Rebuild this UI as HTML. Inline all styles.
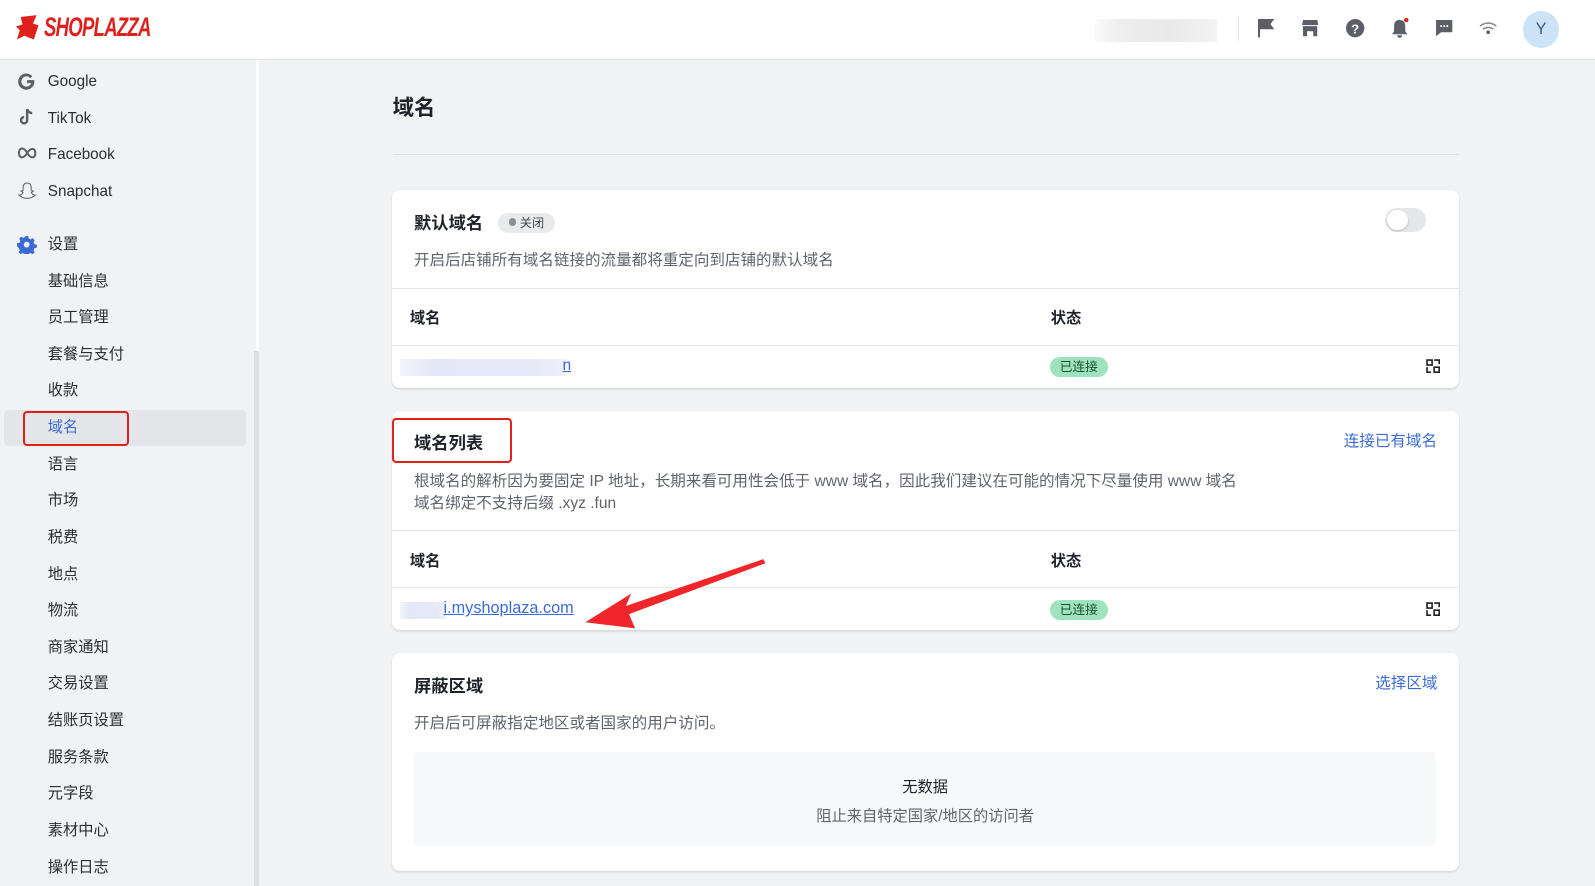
<!DOCTYPE html>
<html><head><meta charset="utf-8"><style>
html,body{margin:0;padding:0;overflow:hidden}
body{width:1568px;height:871px;zoom:1.01722;background:#f1f2f4;font-family:"Liberation Sans","Noto Sans CJK SC",sans-serif;color:#1f2329;position:relative}
.a{position:absolute}
.hdr{left:0;top:0;width:1568px;height:58px;background:#fff;border-bottom:1px solid #e3e5e8}
.side{left:0;top:59px;width:252px;height:812px;background:#f1f2f4;border-right:3px solid #fff}
.it{position:absolute;left:47px;font-size:15px;color:#2a2d33;line-height:20px;margin-top:1px}
.card{position:absolute;left:385px;width:1049px;background:#fff;border-radius:8px;box-shadow:0 1px 2px rgba(0,0,0,.12)}
.ttl{position:absolute;font-size:17px;font-weight:bold;color:#1f2329}
.desc{position:absolute;font-size:15.3px;color:#60646c}
.sep{position:absolute;left:0;width:100%;height:1px;background:#e6e8eb}
.th{position:absolute;font-size:15px;font-weight:bold;color:#1f2329}
.ok{position:absolute;width:57px;height:20px;border-radius:10px;background:#9ee3bd;font-size:12.5px;color:#1f4f33;text-align:center;line-height:20px}
.lnk{position:absolute;font-size:15.3px;color:#3c6bd6}
.blur{position:absolute;height:17px;background:linear-gradient(90deg,#f3f4fa,#e3e7f8 20%,#e6e9f8 80%,#eef0fa)}
.ic{position:absolute;top:18px}
</style></head><body>
<div class="a hdr">
 <svg class="a" style="left:16px;top:14px" width="24" height="28" viewBox="0 0 26 28"><path d="M5 2 L22 0 L18 9 L24 11 L19 26 L9 22 L1 26 L4 16 L0 12 L7 10 Z" fill="#e0201b"/></svg>
 <div class="a" style="left:43px;top:12px;font-size:26px;font-weight:bold;font-style:italic;color:#e0201b;letter-spacing:-1px;transform:scaleX(.7);transform-origin:left">SHOPLAZZA</div>
 <div class="a" style="left:1076px;top:19px;width:120px;height:22px;background:linear-gradient(90deg,#fafafa,#eeeeee 20%,#e9e9e9 60%,#f3f3f3)"></div>
 <div class="a" style="left:1217px;top:16px;width:1px;height:24px;background:#e3e3e3"></div>
 <svg class="ic" style="left:1236px" width="18" height="20" viewBox="0 0 18 20"><path d="M2 1v18M2 2h13l-3 4 3 4H2" fill="#5c5f66" stroke="#5c5f66" stroke-width="2"/></svg>
 <svg class="ic" style="left:1279px" width="18" height="20" viewBox="0 0 18 20"><path d="M2 2h14l1 5H1z M2 8h14v10h-4v-5H6v5H2z" fill="#5c5f66"/></svg>
 <svg class="ic" style="left:1322px" width="20" height="20" viewBox="0 0 20 20"><circle cx="10" cy="10" r="9" fill="#5c5f66"/><text x="10" y="15" font-size="13" font-weight="bold" fill="#fff" text-anchor="middle" font-family="Liberation Sans">?</text></svg>
 <svg class="ic" style="left:1366px" width="20" height="20" viewBox="0 0 20 20"><path d="M9 2c-4 0-5 3-5 6v5l-2 3h15l-2-3V8c0-3-1-6-6-6zM7 17h5a2.5 2.5 0 0 1-5 0z" fill="#5c5f66"/><circle cx="16" cy="2" r="2.2" fill="#e0201b"/></svg>
 <svg class="ic" style="left:1410px" width="20" height="20" viewBox="0 0 20 20"><path d="M2 2h16v12H7l-5 4z" fill="#5c5f66"/><circle cx="7" cy="8" r="1" fill="#fff"/><circle cx="10" cy="8" r="1" fill="#fff"/><circle cx="13" cy="8" r="1" fill="#fff"/></svg>
 <svg class="ic" style="left:1453px" width="20" height="20" viewBox="0 0 20 20"><path d="M2 8a12 12 0 0 1 16 0M5 11a8 8 0 0 1 10 0" fill="none" stroke="#8a8d93" stroke-width="1.6"/><circle cx="10" cy="14" r="1.8" fill="#5c5f66"/></svg>
 <div class="a" style="left:1497px;top:11px;width:36px;height:36px;border-radius:50%;background:#cde3f8;color:#3b5a86;font-size:16px;text-align:center;line-height:36px">Y</div>
</div>
<div class="a side"></div>
<div class="a" style="left:250px;top:345px;width:5px;height:526px;background:#dcdee2"></div>
<svg class="a" style="left:18px;top:71px" width="18" height="18" viewBox="0 0 18 18"><path d="M16 8H9v3h4a5 5 0 1 1-1-5l2-2a8 8 0 1 0 2 4z" fill="#5c5f66"/></svg>
<div class="it" style="top:70px">Google</div>
<svg class="a" style="left:18px;top:106px" width="18" height="18" viewBox="0 0 18 18"><path d="M9 1v11a3 3 0 1 1-3-3" fill="none" stroke="#5c5f66" stroke-width="2.4"/><path d="M9 1c1 3 3 4 5 4" fill="none" stroke="#5c5f66" stroke-width="2.4"/></svg>
<div class="it" style="top:106px">TikTok</div>
<svg class="a" style="left:17px;top:144px" width="20" height="14" viewBox="0 0 20 14"><path d="M10 7C7 1 2 1 2 7s5 5 8 0 8-6 8 0-5 5-8 0" fill="none" stroke="#5c5f66" stroke-width="2"/></svg>
<div class="it" style="top:142px">Facebook</div>
<svg class="a" style="left:17px;top:178px" width="20" height="20" viewBox="0 0 20 20"><path d="M10 2c-3 0-4 2-4 5v2l-2 1 2 1c-1 2-2 3-4 3 1 1 2 1 3 2l3 1h4l3-1c1-1 2-1 3-2-2 0-3-1-4-3l2-1-2-1V7c0-3-1-5-4-5z" fill="none" stroke="#6b6e75" stroke-width="1.1"/></svg>
<div class="it" style="top:178px">Snapchat</div>
<svg class="a" style="left:17px;top:231px" width="19" height="19" viewBox="0 0 20 20"><path d="M8.5 1h3l.5 2.5 2 1 2.3-1.2 2 2-1.2 2.3 1 2 2.5.5v3l-2.5.5-1 2 1.2 2.3-2 2-2.3-1.2-2 1-.5 2.5h-3l-.5-2.5-2-1-2.3 1.2-2-2 1.2-2.3-1-2L0 11.5v-3L2.5 8l1-2-1.2-2.3 2-2L6.6 3l2-1z" fill="#3c6bd6"/><circle cx="10" cy="10" r="3" fill="#f1f2f4"/></svg>
<div class="it" style="top:230px">设置</div>
<div class="a" style="left:4px;top:403px;width:238px;height:35px;background:#e3e5e9;border-radius:4px"></div>
<div class="a" style="left:23px;top:404px;width:100px;height:31px;border:2px solid #e0201b;border-radius:4px"></div>
<div class="it" style="top:266px">基础信息</div>
<div class="it" style="top:302px">员工管理</div>
<div class="it" style="top:338px">套餐与支付</div>
<div class="it" style="top:374px">收款</div>
<div class="it" style="top:410px;color:#3c6bd6">域名</div>
<div class="it" style="top:446px">语言</div>
<div class="it" style="top:482px">市场</div>
<div class="it" style="top:518px">税费</div>
<div class="it" style="top:554px">地点</div>
<div class="it" style="top:590px">物流</div>
<div class="it" style="top:626px">商家通知</div>
<div class="it" style="top:662px">交易设置</div>
<div class="it" style="top:698px">结账页设置</div>
<div class="it" style="top:734px">服务条款</div>
<div class="it" style="top:770px">元字段</div>
<div class="it" style="top:806px">素材中心</div>
<div class="it" style="top:842px">操作日志</div>

<div class="a" style="left:386px;top:89px;font-size:21px;font-weight:bold">域名</div>
<div class="a" style="left:386px;top:151px;width:1048px;height:1px;background:#dfe1e5"></div>

<div class="card" style="top:187px;height:194px">
 <div class="ttl" style="left:22px;top:18px">默认域名</div>
 <div class="a" style="left:105px;top:22px;width:56px;height:20px;border-radius:10px;background:#e9eaec;font-size:12px;color:#444;line-height:20px"><span style="display:inline-block;width:7px;height:7px;border-radius:50%;background:#8a8d93;margin:0 4px 1px 10px"></span>关闭</div>
 <div class="a" style="left:977px;top:17px;width:40px;height:24px;border-radius:12px;background:#e6e7ea"><div class="a" style="left:2px;top:2px;width:20px;height:20px;border-radius:50%;background:#fff;box-shadow:0 1px 2px rgba(0,0,0,.2)"></div></div>
 <div class="desc" style="left:22px;top:57px">开启后店铺所有域名链接的流量都将重定向到店铺的默认域名</div>
 <div class="sep" style="top:96px"></div>
 <div class="th" style="left:18px;top:114px">域名</div>
 <div class="th" style="left:648px;top:114px">状态</div>
 <div class="sep" style="top:152px"></div>
 <div class="blur" style="left:8px;top:166px;width:163px"></div>
 <div class="lnk" style="left:168px;top:164px;text-decoration:underline">n</div>
 <div class="ok" style="left:647px;top:164px">已连接</div>
 <svg class="a" style="left:1017px;top:166px" width="14" height="14" viewBox="0 0 14 14"><path d="M1 1h5v5H1zM8 8h5v5H8zM8 1h5v4M1 8v5h4" fill="none" stroke="#222" stroke-width="1.6"/></svg>
</div>

<div class="card" style="top:404px;height:215px">
 <div class="a" style="left:0px;top:7px;width:114px;height:40px;border:2px solid #e0201b;border-radius:4px"></div>
 <div class="ttl" style="left:22px;top:18px">域名列表</div>
 <div class="lnk" style="left:936px;top:18px">连接已有域名</div>
 <div class="desc" style="left:22px;top:57px">根域名的解析因为要固定 IP 地址，长期来看可用性会低于 www 域名，因此我们建议在可能的情况下尽量使用 www 域名</div>
 <div class="desc" style="left:22px;top:79px">域名绑定不支持后缀 .xyz .fun</div>
 <div class="sep" style="top:117px"></div>
 <div class="th" style="left:18px;top:136px">域名</div>
 <div class="th" style="left:648px;top:136px">状态</div>
 <div class="sep" style="top:173px"></div>
 <div class="blur" style="left:8px;top:188px;width:45px"></div>
 <div class="lnk" style="left:51px;top:185px;text-decoration:underline;font-size:16px">i.myshoplaza.com</div>
 <div class="ok" style="left:647px;top:186px">已连接</div>
 <svg class="a" style="left:1017px;top:188px" width="14" height="14" viewBox="0 0 14 14"><path d="M1 1h5v5H1zM8 8h5v5H8zM8 1h5v4M1 8v5h4" fill="none" stroke="#222" stroke-width="1.6"/></svg>
</div>

<svg class="a" style="left:560px;top:540px" width="200" height="80" viewBox="0 0 200 80"><path d="M190 10 L55 56 L60 44 L15 72 L64 78 L58 64 L192 14 Z" fill="#f0262b"/></svg>

<div class="card" style="top:642px;height:214px">
 <div class="ttl" style="left:22px;top:19px">屏蔽区域</div>
 <div class="lnk" style="left:967px;top:18px">选择区域</div>
 <div class="desc" style="left:22px;top:57px">开启后可屏蔽指定地区或者国家的用户访问。</div>
 <div class="a" style="left:22px;top:97px;width:1005px;height:93px;background:#f7f8fa;border-radius:4px">
  <div class="a" style="left:0;width:100%;top:23px;text-align:center;font-size:15px;color:#1f2329">无数据</div>
  <div class="a" style="left:0;width:100%;top:51px;text-align:center;font-size:15px;color:#60646c">阻止来自特定国家/地区的访问者</div>
 </div>
</div>
</body></html>
